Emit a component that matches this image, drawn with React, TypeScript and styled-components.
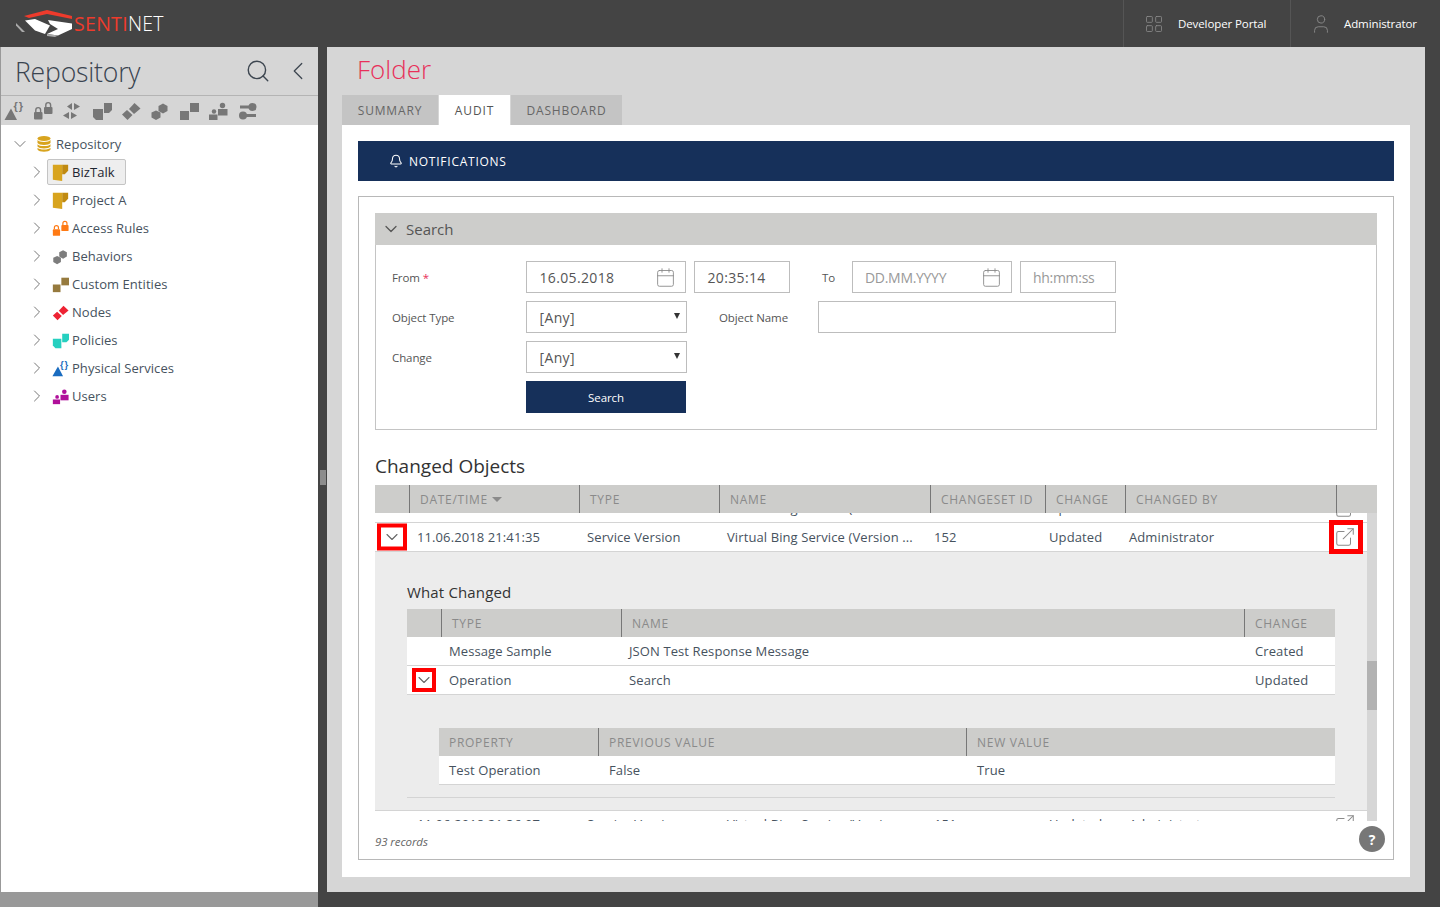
import React from "react";
import styled, { createGlobalStyle } from "styled-components";
import {
  Bell,
  Calendar,
  ChevronDown,
  ChevronLeft,
  ChevronRight,
  ExternalLink,
  LayoutGrid,
  Search as SearchIcon,
  User,
} from "lucide-react";

const FONT = `"Open Sans", "Noto Sans", "Liberation Sans", sans-serif`;

const GlobalStyle = createGlobalStyle`
  html, body { margin: 0; padding: 0; height: 100%; overflow: hidden; }
  body { background: #444; font-family: ${FONT}; color: #444; font-size: 13px; }
  * { box-sizing: border-box; }
`;

const Page = styled.div`
  width: 1440px;
  height: 907px;
  display: flex;
  flex-direction: column;
  background: #444;
`;

// ---- Top bar ----

const TopBar = styled.header`
  height: 47px;
  flex: none;
  display: flex;
  align-items: stretch;
  justify-content: space-between;
`;

const Brand = styled.div`
  display: flex;
  align-items: center;
  padding-left: 16px;
`;

const BrandName = styled.span`
  font-family: "Open Sans", sans-serif;
  font-weight: 300;
  font-size: 19.5px;
  letter-spacing: 0.3px;
  color: #fff;
  em {
    font-style: normal;
    font-weight: 400;
    color: #ee3b2c;
  }
`;

const TopActions = styled.div`
  display: flex;
`;

const TopAction = styled.div<{ $width: number; $gap: number; $pad: number }>`
  width: ${(p) => p.$width}px;
  padding-left: ${(p) => p.$pad}px;
  gap: ${(p) => p.$gap}px;
  display: flex;
  align-items: center;
  border-left: 1px solid #555;
  color: #fff;
  font-size: 11.5px;
  letter-spacing: -0.1px;
  svg {
    color: #8a8a8a;
    flex: none;
  }
`;

// ---- Sidebar ----

const Workspace = styled.div`
  flex: 1;
  display: flex;
  min-height: 0;
`;

const Sidebar = styled.aside`
  width: 318px;
  flex: none;
  display: flex;
  flex-direction: column;
  background: #999;
  padding: 0 0 15px 1px;
`;

const SideHead = styled.div`
  height: 49px;
  flex: none;
  background: #d6d6d6;
  display: flex;
  align-items: center;
  padding: 0 5px 0 14px;
  color: #3d4650;
  border-bottom: 1px solid #b4b4b4;
`;

const SideTitle = styled.h2`
  flex: 1;
  margin: 2px 0 0;
  font-weight: 300;
  font-size: 26.6px;
  letter-spacing: -0.2px;
  color: #3a4450;
`;

const SideTools = styled.div`
  height: 29px;
  flex: none;
  background: #d6d6d6;
  display: flex;
  align-items: center;
  gap: 9.2px;
  padding-left: 3px;
`;

const Tree = styled.div`
  flex: 1;
  background: #fff;
  padding: 5px 0 0 0;
`;

const TreeRow = styled.div<{ $root?: boolean }>`
  height: 28px;
  display: flex;
  align-items: center;
  padding-left: ${(p) => (p.$root ? 9 : 26)}px;
  svg.chev {
    color: #777;
    flex: none;
  }
`;

const RootLabel = styled.div`
  display: flex;
  align-items: center;
  gap: 5px;
  margin-left: 7px;
  color: #46525e;
  font-size: 13px;
  letter-spacing: 0.05px;
`;

const TreeLabel = styled.div<{ $selected?: boolean }>`
  height: 26px;
  display: flex;
  align-items: center;
  gap: 3px;
  padding: 0 10px 0 4px;
  border: 1px solid ${(p) => (p.$selected ? "#c4c4c4" : "transparent")};
  background: ${(p) => (p.$selected ? "#eee" : "transparent")};
  border-radius: 2px;
  color: ${(p) => (p.$selected ? "#1d2530" : "#46525e")};
  font-size: 13px;
  letter-spacing: 0.05px;
  white-space: nowrap;
`;

const Splitter = styled.div`
  width: 9px;
  flex: none;
  display: flex;
  align-items: center;
  justify-content: center;
  &::after {
    content: "";
    width: 6px;
    height: 15px;
    background: #8c8c8c;
  }
`;

// ---- Main panel ----

const Main = styled.main`
  width: 1098px;
  flex: none;
  background: #d6d6d6;
  margin-bottom: 15px;
  padding: 0 15px 15px;
  display: flex;
  flex-direction: column;
`;

const PageTitle = styled.h1`
  height: 48px;
  margin: 0;
  padding-left: 15px;
  font-weight: 300;
  font-size: 26px;
  line-height: 44px;
  color: #e8305a;
`;

const Tabs = styled.div`
  height: 30px;
  flex: none;
  display: flex;
  gap: 1px;
`;

const Tab = styled.div<{ $active?: boolean; $width: number }>`
  width: ${(p) => p.$width}px;
  background: ${(p) => (p.$active ? "#fff" : "#c4c4c4")};
  color: ${(p) => (p.$active ? "#555" : "#666")};
  display: flex;
  align-items: center;
  justify-content: center;
  font-size: 12px;
  letter-spacing: 0.85px;
  text-transform: uppercase;
`;

const Content = styled.div`
  flex: 1;
  background: #fff;
  padding: 16px 16px 17px;
  display: flex;
  flex-direction: column;
  min-height: 0;
`;

const NoticeBar = styled.div`
  height: 40px;
  flex: none;
  background: #16305a;
  color: #fff;
  display: flex;
  align-items: center;
  gap: 6px;
  padding-left: 31px;
  font-size: 12px;
  letter-spacing: 0.75px;
  text-transform: uppercase;
`;

const AuditBox = styled.section`
  flex: 1;
  margin-top: 15px;
  border: 1px solid #b8b8b8;
  padding: 16px 16px 0;
  position: relative;
  display: flex;
  flex-direction: column;
  min-height: 0;
`;

// ---- Search form ----

const SearchPanel = styled.div`
  height: 217px;
  flex: none;
  border: 1px solid #c4c4c4;
  border-top: none;
`;

const SearchHead = styled.div`
  height: 32px;
  margin: 0 -1px;
  background: #cdcdcb;
  display: flex;
  align-items: center;
  gap: 5px;
  padding-left: 6px;
  font-size: 15px;
  color: #555;
  svg {
    color: #555;
  }
`;

const SearchBody = styled.div`
  padding: 16px 0 0 16px;
  display: flex;
  flex-direction: column;
  gap: 8px;
`;

const FormRow = styled.div`
  display: flex;
  align-items: center;
  height: 32px;
`;

const FieldLabel = styled.label<{ $width: number }>`
  width: ${(p) => p.$width}px;
  flex: none;
  font-size: 11.5px;
  letter-spacing: -0.1px;
  color: #555;
  i {
    color: #e8305a;
    font-style: normal;
  }
`;

const Field = styled.div<{ $width: number; $muted?: boolean; $gapAfter?: number }>`
  width: ${(p) => p.$width}px;
  height: 32px;
  flex: none;
  margin-right: ${(p) => p.$gapAfter ?? 0}px;
  border: 1px solid #bdbdbd;
  display: flex;
  align-items: center;
  justify-content: space-between;
  padding: 0 9px 0 ${(p) => (p.$muted ? 12 : 12.5)}px;
  font-size: 14px;
  letter-spacing: ${(p) => (p.$muted ? "-0.3px" : "0.35px")};
  color: ${(p) => (p.$muted ? "#999" : "#555")};
  svg {
    color: #888;
    flex: none;
  }
`;

const SelectArrow = styled.span`
  width: 0;
  height: 0;
  margin: -2px -3px 0 0;
  border-left: 3px solid transparent;
  border-right: 3px solid transparent;
  border-top: 6px solid #333;
`;

const SearchButton = styled.button`
  width: 160px;
  height: 32px;
  margin-left: 134px;
  border: none;
  background: #16305a;
  color: #fff;
  font-family: inherit;
  font-size: 11.5px;
  letter-spacing: -0.1px;
`;

// ---- Tables ----

const SectionTitle = styled.h3`
  margin: 22px 0 4px;
  height: 29px;
  flex: none;
  line-height: 29px;
  font-weight: 400;
  font-size: 19px;
  letter-spacing: 0;
  color: #333;
`;

const HeadRow = styled.div<{ $cols: string }>`
  height: 28px;
  flex: none;
  display: grid;
  grid-template-columns: ${(p) => p.$cols};
  background: #cdcdcb;
`;

const HeadCell = styled.div`
  display: flex;
  align-items: center;
  gap: 4px;
  padding-left: 10px;
  font-size: 12px;
  letter-spacing: 0.72px;
  text-transform: uppercase;
  color: #8a8a8a;
  white-space: nowrap;
  &:not(:first-child) {
    border-left: 1px solid #777;
  }
`;

const SortArrow = styled.span`
  width: 0;
  height: 0;
  border-left: 5px solid transparent;
  border-right: 5px solid transparent;
  border-top: 5px solid #8a8a8a;
`;

const Viewport = styled.div`
  height: 308px;
  flex: none;
  display: flex;
  overflow: hidden;
`;

const ScrollBody = styled.div`
  flex: 1;
  min-width: 0;
  margin-top: -19px;
`;

const ScrollTrack = styled.div`
  width: 10px;
  flex: none;
  background: #d6d6d6;
  padding-top: 148px;
  &::after {
    content: "";
    display: block;
    height: 49px;
    background: #b2b2b2;
  }
`;

const DataRow = styled.div<{ $cols: string; $height?: number }>`
  height: ${(p) => p.$height ?? 29}px;
  display: grid;
  grid-template-columns: ${(p) => p.$cols};
  align-items: center;
  background: #fff;
  border-bottom: 1px solid #d4d4d4;
  font-size: 13px;
  letter-spacing: 0.1px;
  color: #46525e;
`;

const Cell = styled.div<{ $pad?: number }>`
  padding-left: ${(p) => p.$pad ?? 8}px;
  white-space: nowrap;
  overflow: hidden;
`;

const IconCell = styled.div`
  display: flex;
  align-items: center;
  justify-content: center;
  color: #666;
  position: relative;
`;

const LinkCell = styled(IconCell)`
  color: #8a8a8a;
  justify-content: flex-start;
  svg {
    margin-left: -2px;
  }
`;

const RedMark = styled.span<{ $w: number; $h: number; $border?: number; $left?: string }>`
  position: absolute;
  left: ${(p) => p.$left ?? "50%"};
  top: 50%;
  width: ${(p) => p.$w}px;
  height: ${(p) => p.$h}px;
  transform: translate(-50%, -50%);
  border: ${(p) => p.$border ?? 4}px solid #f00;
`;

const Expansion = styled.div`
  height: 259px;
  background: #ececec;
  border-bottom: 1px solid #d4d4d4;
  padding: 28px 32px 0;
`;

const SubTitle = styled.div`
  height: 29px;
  line-height: 24px;
  font-size: 15px;
  letter-spacing: 0.15px;
  color: #333;
`;

const InnerBlock = styled.div`
  height: 102px;
  padding-left: 32px;
  padding-top: 33px;
`;

const Rule = styled.div`
  border-top: 1px solid #d4d4d4;
`;

const Records = styled.div`
  flex: 1;
  display: flex;
  align-items: center;
  padding-top: 3px;
  font-size: 11.5px;
  font-style: italic;
  letter-spacing: -0.1px;
  color: #666;
`;

const HelpButton = styled.div`
  position: absolute;
  right: 8px;
  bottom: 7px;
  width: 26px;
  height: 26px;
  border-radius: 50%;
  background: #777;
  color: #fff;
  font-weight: 700;
  font-size: 14px;
  display: flex;
  align-items: center;
  justify-content: center;
`;

// ---- Drawn icons ----

type Kind =
  | "service"
  | "locks"
  | "arrows"
  | "policy"
  | "node"
  | "behavior"
  | "entity"
  | "users"
  | "keys"
  | "folder";

function Glyph({ kind, color, size = 20 }: { kind: Kind; color: string; size?: number }) {
  let body: React.ReactNode = null;
  if (kind === "service") {
    body = (
      <>
        <path d="M0.5 19 L7 7.5 L13 19 Z" />
        <text x="9.5" y="9" fontSize="11" fontWeight="700" fontFamily="Liberation Sans, sans-serif" letterSpacing="1">
          {"{}"}
        </text>
      </>
    );
  } else if (kind === "locks") {
    body = (
      <>
        <rect x="1" y="11" width="8.5" height="7.5" rx="1" />
        <path d="M2.8 11 V9 a2.4 2.4 0 0 1 4.8 0 V11" fill="none" stroke={color} strokeWidth="1.4" />
        <rect x="11" y="6" width="8.5" height="7" rx="1" />
        <path d="M12.8 6 V4 a2.4 2.4 0 0 1 4.8 0 V6" fill="none" stroke={color} strokeWidth="1.4" />
      </>
    );
  } else if (kind === "arrows") {
    body = (
      <>
        <path d="M10 2 V9 L5 5.5 Z" />
        <path d="M12 2 V9 L18 5.5 Z" />
        <path d="M7 11 V18 L1 14.5 Z" />
        <path d="M9 11 V18 L15 14.5 Z" />
      </>
    );
  } else if (kind === "policy") {
    body = (
      <>
        <path d="M1 8 H11 V19 H4 L1 16 Z" />
        <path d="M12 2 H20 V9 L17 12 H12 Z" />
      </>
    );
  } else if (kind === "node") {
    body = (
      <>
        <path d="M6 9 L11.5 14 L6.5 19 L1 13.5 Z" />
        <path d="M13.5 2 L19.5 7.5 L13 13 L8 8 Z" />
      </>
    );
  } else if (kind === "behavior") {
    body = (
      <>
        <path d="M6 9.5 L10.5 11.5 L10.5 16.5 L6 19 L1.5 16.5 L1.5 11.5 Z" />
        <path d="M13 2.5 L17.5 5 L17.5 10 L13 12.5 L8.5 10 L8.5 5 Z" />
      </>
    );
  } else if (kind === "entity") {
    body = (
      <>
        <rect x="1" y="10" width="9" height="9" />
        <rect x="11" y="2" width="9" height="9" />
      </>
    );
  } else if (kind === "users") {
    body = (
      <>
        <circle cx="6" cy="10.5" r="2.2" />
        <rect x="1" y="13.5" width="8.5" height="5.5" />
        <circle cx="14.5" cy="4.5" r="2.7" />
        <rect x="10" y="8" width="9.5" height="6.5" />
      </>
    );
  } else if (kind === "keys") {
    body = (
      <>
        <circle cx="14.5" cy="6" r="4" />
        <rect x="2" y="4.5" width="10" height="3" />
        <circle cx="5" cy="14.5" r="4" />
        <rect x="7" y="13" width="11" height="3" />
      </>
    );
  } else {
    body = (
      <>
        <path d="M1 1 H12 V20 L1 18.5 Z" fill={color} />
        <path d="M12 1 H19 V8 L15 12 H12 Z" fill="#c08a10" />
      </>
    );
  }
  return (
    <svg width={size} height={size} viewBox="0 0 20 20" fill={color} style={{ flex: "none" }}>
      {body}
    </svg>
  );
}

function RepoDb() {
  return (
    <svg width="14" height="16" viewBox="0 0 14 16" fill="#d8a41e" style={{ flex: "none" }}>
      <ellipse cx="7" cy="2.5" rx="6.5" ry="2.5" />
      <path d="M0.5 4 C2 6.5 12 6.5 13.5 4 V7 C12 9.5 2 9.5 0.5 7 Z" />
      <path d="M0.5 8.2 C2 10.7 12 10.7 13.5 8.2 V10.5 C12 13 2 13 0.5 10.5 Z" />
      <path d="M0.5 11.8 C2 14.2 12 14.2 13.5 11.8 V13.5 C12 16.4 2 16.4 0.5 13.5 Z" />
    </svg>
  );
}

function Logo() {
  return (
    <svg width="58" height="32" viewBox="0 0 58 32">
      <path d="M8 8 L31 2 L56 8 L56 11 L31 6 L13 10 Z" fill="#ee3b2c" />
      <path d="M9 12.5 L19 11 L34 17.5 L29 26 L19 22.5 Z" fill="#fff" />
      <path d="M32 12 L56 15.5 L56 21 L42 27.5 L31 26 L42 21 L34 16 Z" fill="#fff" />
      <path d="M0 15 L9 24 L6 24 L0 17.5 Z" fill="#aaa" />
      <path d="M31 26 L42 27.5 L39 29 L31 28 Z" fill="#aaa" />
    </svg>
  );
}

// ---- Data ----

const TOOLBAR: Kind[] = ["service", "locks", "arrows", "policy", "node", "behavior", "entity", "users", "keys"];

const TREE: { label: string; kind: Kind; color: string; selected?: boolean }[] = [
  { label: "BizTalk", kind: "folder", color: "#d8a41e", selected: true },
  { label: "Project A", kind: "folder", color: "#d8a41e" },
  { label: "Access Rules", kind: "locks", color: "#ff7a14" },
  { label: "Behaviors", kind: "behavior", color: "#7d7d7d" },
  { label: "Custom Entities", kind: "entity", color: "#967a3e" },
  { label: "Nodes", kind: "node", color: "#ee2233" },
  { label: "Policies", kind: "policy", color: "#26d0c0" },
  { label: "Physical Services", kind: "service", color: "#1a6cc0" },
  { label: "Users", kind: "users", color: "#b0109a" },
];

const MAIN_HEAD = "34px 170px 140px 211px 115px 80px 211px 41px";
const MAIN_ROW = "34px 170px 140px 211px 115px 80px 211px 31px";
const CHANGE_COLS = "34px 180px 623px 91px";
const PROP_COLS = "159px 368px 369px";

const AUDIT_ROWS = [
  { date: "11.06.2018 21:42:10", id: "153", open: false },
  { date: "11.06.2018 21:41:35", id: "152", open: true },
  { date: "11.06.2018 21:36:07", id: "151", open: false, height: 26 },
];

function AuditRow({ date, id, open, height }: { date: string; id: string; open: boolean; height?: number }) {
  return (
    <DataRow $cols={MAIN_ROW} $height={height}>
      <IconCell>
        <ChevronDown size={20} strokeWidth={1.3} />
        {open && <RedMark $w={30} $h={27} />}
      </IconCell>
      <Cell>{date}</Cell>
      <Cell>Service Version</Cell>
      <Cell>Virtual Bing Service (Version ...</Cell>
      <Cell $pad={4}>{id}</Cell>
      <Cell $pad={4}>Updated</Cell>
      <Cell $pad={4}>Administrator</Cell>
      <LinkCell>
        <ExternalLink size={22} strokeWidth={1.1} />
        {open && <RedMark $w={34} $h={34} $border={5} $left="10px" />}
      </LinkCell>
    </DataRow>
  );
}

export default function App() {
  return (
    <Page>
      <GlobalStyle />
      <TopBar>
        <Brand>
          <Logo />
          <BrandName>
            <em>SENTI</em>NET
          </BrandName>
        </Brand>
        <TopActions>
          <TopAction $width={167} $pad={20} $gap={14}>
            <LayoutGrid size={20} strokeWidth={1} />
            Developer Portal
          </TopAction>
          <TopAction $width={150} $pad={19} $gap={12}>
            <User size={22} strokeWidth={1} />
            Administrator
          </TopAction>
        </TopActions>
      </TopBar>

      <Workspace>
        <Sidebar>
          <SideHead>
            <SideTitle>Repository</SideTitle>
            <SearchIcon size={26} strokeWidth={1.3} />
            <ChevronLeft size={30} strokeWidth={1} style={{ marginLeft: 12 }} />
          </SideHead>
          <SideTools>
            {TOOLBAR.map((kind) => (
              <Glyph key={kind} kind={kind} color="#777" />
            ))}
          </SideTools>
          <Tree>
            <TreeRow $root>
              <ChevronDown className="chev" size={20} strokeWidth={1.2} />
              <RootLabel>
                <RepoDb />
                Repository
              </RootLabel>
            </TreeRow>
            {TREE.map((item) => (
              <TreeRow key={item.label}>
                <ChevronRight className="chev" size={20} strokeWidth={1.2} />
                <TreeLabel $selected={item.selected}>
                  <Glyph kind={item.kind} color={item.color} size={17} />
                  {item.label}
                </TreeLabel>
              </TreeRow>
            ))}
          </Tree>
        </Sidebar>
        <Splitter />
        <Main>
          <PageTitle>Folder</PageTitle>
          <Tabs>
            <Tab $width={96}>Summary</Tab>
            <Tab $width={71} $active>
              Audit
            </Tab>
            <Tab $width={111}>Dashboard</Tab>
          </Tabs>
          <Content>
            <NoticeBar>
              <Bell size={14} strokeWidth={1.8} />
              Notifications
            </NoticeBar>
            <AuditBox>
              <SearchPanel>
                <SearchHead>
                  <ChevronDown size={20} strokeWidth={1.5} />
                  Search
                </SearchHead>
                <SearchBody>
                  <FormRow>
                    <FieldLabel $width={134}>
                      From <i>*</i>
                    </FieldLabel>
                    <Field $width={160} $gapAfter={8}>
                      16.05.2018
                      <Calendar size={21} strokeWidth={1} />
                    </Field>
                    <Field $width={96} $gapAfter={32}>
                      20:35:14
                    </Field>
                    <FieldLabel $width={30}>To</FieldLabel>
                    <Field $width={160} $gapAfter={8} $muted>
                      DD.MM.YYYY
                      <Calendar size={21} strokeWidth={1} />
                    </Field>
                    <Field $width={96} $muted>
                      hh:mm:ss
                    </Field>
                  </FormRow>
                  <FormRow>
                    <FieldLabel $width={134}>Object Type</FieldLabel>
                    <Field $width={161} $gapAfter={32}>
                      [Any]
                      <SelectArrow />
                    </Field>
                    <FieldLabel $width={99}>Object Name</FieldLabel>
                    <Field $width={298} />
                  </FormRow>
                  <FormRow>
                    <FieldLabel $width={134}>Change</FieldLabel>
                    <Field $width={161}>
                      [Any]
                      <SelectArrow />
                    </Field>
                  </FormRow>
                  <SearchButton>Search</SearchButton>
                </SearchBody>
              </SearchPanel>

              <SectionTitle>Changed Objects</SectionTitle>
              <HeadRow $cols={MAIN_HEAD}>
                <HeadCell />
                <HeadCell>
                  Date/Time
                  <SortArrow />
                </HeadCell>
                <HeadCell>Type</HeadCell>
                <HeadCell>Name</HeadCell>
                <HeadCell>Changeset ID</HeadCell>
                <HeadCell>Change</HeadCell>
                <HeadCell>Changed By</HeadCell>
                <HeadCell />
              </HeadRow>
              <Viewport>
                <ScrollBody>
                  <AuditRow {...AUDIT_ROWS[0]} />
                  <AuditRow {...AUDIT_ROWS[1]} />
                  <Expansion>
                    <SubTitle>What Changed</SubTitle>
                    <HeadRow $cols={CHANGE_COLS}>
                      <HeadCell />
                      <HeadCell>Type</HeadCell>
                      <HeadCell>Name</HeadCell>
                      <HeadCell>Change</HeadCell>
                    </HeadRow>
                    <DataRow $cols={CHANGE_COLS}>
                      <span />
                      <Cell>Message Sample</Cell>
                      <Cell>JSON Test Response Message</Cell>
                      <Cell $pad={11}>Created</Cell>
                    </DataRow>
                    <DataRow $cols={CHANGE_COLS}>
                      <IconCell>
                        <ChevronDown size={20} strokeWidth={1.3} />
                        <RedMark $w={24} $h={24} />
                      </IconCell>
                      <Cell>Operation</Cell>
                      <Cell>Search</Cell>
                      <Cell $pad={11}>Updated</Cell>
                    </DataRow>
                    <InnerBlock>
                      <HeadRow $cols={PROP_COLS}>
                        <HeadCell>Property</HeadCell>
                        <HeadCell>Previous Value</HeadCell>
                        <HeadCell>New Value</HeadCell>
                      </HeadRow>
                      <DataRow $cols={PROP_COLS}>
                        <Cell $pad={10}>Test Operation</Cell>
                        <Cell $pad={11}>False</Cell>
                        <Cell $pad={11}>True</Cell>
                      </DataRow>
                    </InnerBlock>
                    <Rule />
                  </Expansion>
                  <AuditRow {...AUDIT_ROWS[2]} />
                </ScrollBody>
                <ScrollTrack />
              </Viewport>
              <Records>93 records</Records>
              <HelpButton>?</HelpButton>
            </AuditBox>
          </Content>
        </Main>
      </Workspace>
    </Page>
  );
}
